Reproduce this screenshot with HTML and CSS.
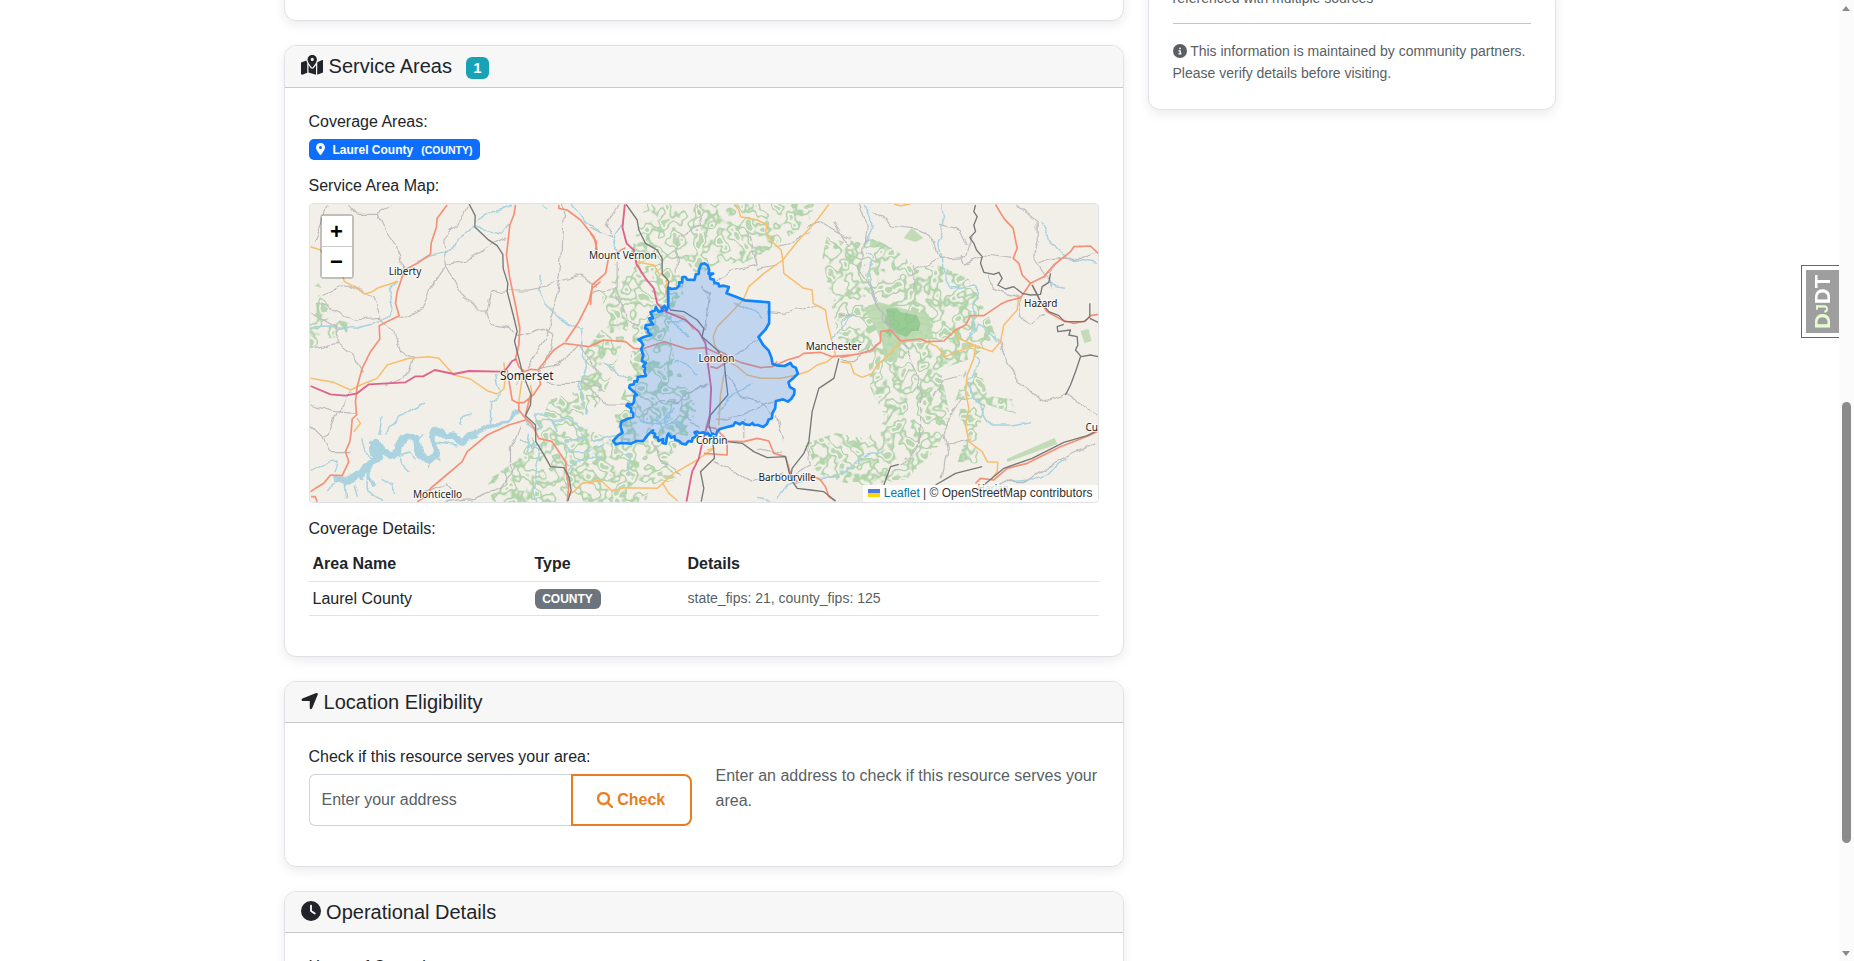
FILE: index.html
```html
<!DOCTYPE html>
<html lang="en">
<head>
<meta charset="utf-8">
<title>Resource Details</title>
<link rel="stylesheet" href="styles.css">
</head>
<body>
<div class="screen">
<div class="page">
  <main class="main-col">
    <section class="card card-prev"></section>

    <section class="card">
      <header class="card-header card-header-badge">
        <svg class="icon icon-map" viewBox="0 0 576 512"><path d="M408 120c0 54.6-73.1 151.9-105.2 192c-7.7 9.6-22 9.6-29.6 0C241.1 271.9 168 174.6 168 120C168 53.7 221.7 0 288 0s120 53.7 120 120zm8 80.4c3.5-6.9 6.7-13.8 9.6-20.6c.5-1.2 1-2.5 1.5-3.7l116-46.4C558.9 123.4 576 135 576 152V422.8c0 9.8-6 18.6-15.1 22.3L416 503V200.4zM137.6 138.3c2.4 14.1 7.2 28.3 12.8 41.5c2.9 6.8 6.1 13.7 9.6 20.6V451.8L32.9 502.7C17.1 509 0 497.4 0 480.4V209.6c0-9.8 6-18.6 15.1-22.3l122.6-49zM327.8 332c13.9-17.4 35.7-45.7 56.2-77V504.3L192 449.4V255c20.5 31.3 42.3 59.6 56.2 77c20.5 25.6 59.1 25.6 79.6 0zM288 152a40 40 0 1 0 0-80 40 40 0 1 0 0 80z"/></svg>
        <h5>Service Areas</h5><span class="badge badge-count">1</span>
      </header>
      <div class="card-body">
        <h6>Coverage Areas:</h6>
        <div class="badges"><span class="badge badge-primary"><svg class="icon icon-pin" viewBox="0 0 384 512"><path d="M215.7 499.2C267 435 384 279.4 384 192C384 86 298 0 192 0S0 86 0 192c0 87.4 117 243 168.3 307.2c12.3 15.3 35.1 15.3 47.4 0zM192 128a64 64 0 1 1 0 128 64 64 0 1 1 0-128z"/></svg><span>Laurel County</span><small>(COUNTY)</small></span></div>
        <h6>Service Area Map:</h6>
        <div class="map">
          <svg class="map-canvas" viewBox="309.5 204 788 298" preserveAspectRatio="none">
            <defs>
              <filter id="woods" x="0" y="0" width="100%" height="100%" color-interpolation-filters="sRGB">
                <feTurbulence type="fractalNoise" baseFrequency=".085" numOctaves="2" seed="8" result="n"/>
                <feColorMatrix in="n" type="matrix" values="0 0 0 0 .70  0 0 0 0 .83  0 0 0 0 .67  1 0 0 0 0"/>
                <feComponentTransfer><feFuncA type="table" tableValues="0 0 0 0 0 0 0 0 0 0 0 0 0 0 .2 1 1 .6 0 0 0 .8 .9 .9 .9 .9 .9 .9 .9 .9 .9"/></feComponentTransfer>
                <feComposite in2="SourceGraphic" operator="in"/>
              </filter>
              <filter id="wiggle" x="-5%" y="-5%" width="110%" height="110%" color-interpolation-filters="sRGB">
                <feTurbulence type="fractalNoise" baseFrequency=".09" numOctaves="1" seed="3"/>
                <feDisplacementMap in="SourceGraphic" scale="9" xChannelSelector="R" yChannelSelector="G"/>
              </filter>
            </defs>
            <rect class="land" x="300" y="195" width="810" height="320"/>

            <!-- woodland -->
            <g filter="url(#woods)">
              <rect x="300" y="195" width="810" height="320" fill="none"/>
              <path d="M309 300l22-6-6 24 22 4v12l-24 6-14 10zM645 204h170l-8 20-24 16-14 10-28 14-22-2-22 14-14-18-16 22-22 22-14 14-10 30-14 40-10 20-16 10-18 40 20 10 14 20-32 14-18 20 2 30h-60l4-40-6-30 30-20 20-30 12-30 30-10 6-40 20-26-4-34 24-20z"/>
              <path d="M646 275l30-2 20 16-20 10-8 30 6 30 22 50-10 30-20 20 10 20-30 10-30-4 8-30-10-40 12-30 6-40-4-40zM535 420h30l70 30 20 20-10 32h-105l-5-40z"/>
              <path d="M826 237l26 4 22-2 20 10 24 20 20-4 30 14 18 30 10 30-26 20-30 10 10 50-14 30-30 30-50 8-40-14-10-30 30-10 30 6 20-20-16-30-2-30-30-20-10-50-6-32zM965 370l16 4 6 22 30 4-2 14-30-10-10 40 6 20-24-2 10-30-14-26z"/>
            </g>
            <g class="forest">
              <path d="M878 302l30 8 20 4 5 24-20 4-32 0-6-14-12-20zM880 330l20 12-4 20-12-1zM903 238l8-10 12 10-8 4zM870 240l7 1-2 7-6-1zM1006 459l48-21 3 6-50 18zM1080 331l8-2 3 12-7 2zM838 240l6 2-4 4zM314 286l4-3 3 5z"/>
              <path class="deep" d="M886 309l10-1 4 4 10 2 6 1 4 8-2 8-6 0-6 6-8-3-6-2-2 6-5-6 4-4-5-6 2-6z"/>
            </g>

            <!-- water -->
            <g class="water" filter="url(#wiggle)">
              <g transform="translate(300 195) scale(.33333)">
                <path class="lake" d="M98 852L135 856 165 840 190 825 205 800 235 790 215 760 228 742 240 770 270 782 295 770 300 735 320 725 350 735 360 780 385 797 405 780 400 740 395 705 420 715 440 725 460 722 485 745 505 722 530 712"/>
                <path class="creek wide" d="M530 712L560 700 580 688 620 685 635 655 655 655M205 800l0 50 15 20M240 770l-30-30M190 825l-10 30"/>
                <path class="creek" d="M30 400q80-10 140 0l80-25 30-30-15-60 20-30M525 100l80 15 20-25M520 80l60-30 40-10 20-10M520 95l-50 35-10 35-60 15-50 20M180 730l10 40 30 20M250 720l50-60 60-30 20-5M330 830l-30-30-5-30M130 850l5 60M200 820l0 60 50 40M240 850l40 20 5 30M30 832l60-30 20 0-10 30M480 690l10-30 20-5M720 240l-10 40 20 40 60 60 50 20 5 60 10 60-20 60 30 80M570 690l0-70 30-20-15-60M670 660q20 60 50 40l-15-40 40 0 25 50-10-30 40-10 30 20 30 40-40 10-30 0 20 30 60 0 40-20M690 750l30 0-10 60-10 80 10 30M790 840l50-50 60 0M810 20l40 60 50 30M740 40l-20-15M660 730l40 30M470 750l-60-10-15 20M690 720l-10 60M345 790l-15-20-30 10M385 797l0 25M420 790l-15 0M360 740l10-20M235 720l10-50M160 865l10 40M100 865l-20 20"/>
              </g>
              <g transform="translate(590 195) scale(.33333)">
                <path class="creek" d="M100 80l-30 60 15 30M220 350l30 30 50 50M230 380l60 0M250 500l40 10 30 30M430 325l60 20 30 20M480 570l-70 40-30 50M180 700l20-40 0 30 30-30 20-30M200 690l30-10 0-30M210 710l40-30 20 10M150 680l60 10 40-20M0 740l80-20 15-20M40 500l80 60M90 780l30 0-5 60M780 370l-50 60M560 910l30-40 50-20 80 0 60-30M500 910l50 10"/>
              </g>
              <g transform="translate(840 195) scale(.33333)">
                <path class="creek" d="M75 30l20 60-20 60M80 170l20 20-20 60 30 70M300 30l10 60-20 50 20 90 20 50 80-10-10 100-10 60 20-40 70 50M400 480l20 20-40 60 40 80 30 50 60 0 60-10M0 840l80-60 50-10M0 380l40-20M480 860l120-10 80-60M620 270l50 10M600 80l30 60 50 50 90 15"/>
              </g>
            </g>

            <!-- minor roads -->
            <g class="minor" filter="url(#wiggle)">
              <g transform="translate(300 195) scale(.33333)">
                <path d="M80 30l-40 110M150 30l20 25 60 0 40-25M230 55l30 65 40 60 10 60M60 300l80-30 80 30 20 70-80 5-110-50M240 370l40 40 20 60 40 20-30 60-60 20M300 370l70-30 20-60 45-65-5-80 50-60 20-40M440 205l60-10 80-50 40-20M440 215l40 80 50 50 30 0 10 40 60 10 20 30 80-25 30 20-40 120M560 345l10-50 60-10 60 0 150-45 50 40M790 30l-10 180-10 80-30 130-60 100M30 460l80-15 50 40 30 50M30 630l70 20 70 5M30 690l40 40 20 40 60 0M75 730l30-70 50-70M110 445l0-50-80-40M715 520l60-10 60-60 60 80M730 565l110 0 60 10M660 690l-30 70 0 70-30 50-80 30-90 10M430 865l50 50M370 890l60-20M640 570l30-50"/>
              </g>
              <g transform="translate(590 195) scale(.33333)">
                <path d="M80 30l-30 60 20 40-70-30M80 200l0 80-80 15M80 300l30 70 30 30M320 30l10 60-70 40 0 100M470 110l30 100-80 20-50 40M500 220l60-10M650 95l40-15 90 50M660 110l-70 40-40 10M530 350l60 5 60-25 40 10M330 270l30 30-15 100M500 430l-60 50-40 10M345 560l-80 60-50 0-60 30M350 560l-70 50 0 50 50 40M400 530l60 80 50 10M370 680l80-20 100-40M0 590l60 40 50 0M180 740l30 50 60 50M370 800l80 40 30 20 100-20M460 730l0-60M560 660l20 80M510 620l40 40M500 760l80 15M650 750l10 60-60 40M730 80l50 80"/>
              </g>
              <g transform="translate(840 195) scale(.33333)">
                <path d="M60 30l20 60-10 100-20 30 50 70 30 90 60 60 40 100 10 80 0 120-40 60-20 10M95 50l60 40 70 10 50 30 20 60 80-5 20-60M300 90l60 20 20 40M365 180l10 30 60-30 80 10M220 290l0-60 70-40M440 240l20 40 80 30M530 30l60 50 0 60-10 40 40 60 10 40M660 190l-60 10M480 440l20 60 40 60 60 60 80-20 90 60M540 310l-10 50 40 30 40-30M370 600l-40 60-20 60 10 40-15 90M370 540l-60 15-30 50M770 740l-120 60-100 60-70 0M0 350l50 20M110 320l40 70M0 500l40 0 80-60M780 170l-60 20-60 0-50 60M390 730l-70 20"/>
              </g>
            </g>

            <!-- main roads -->
            <g class="roads">
              <g transform="translate(300 195) scale(.33333)">
                <path class="sec" d="M30 155l30 10 10 15M127 245l5 15 30 15 30 22 20-5 20-13 60-20M30 550l70 12 50 23 30-15 50-20 30-40 65-20 60-5 30 5 45 50 50 12 50 35 30 10 20-15 5-35-5-45M170 670l10 15-20 25M655 620l10-70 5-20M690 570l5 25-15 25M815 895l30-30 55-8"/>
                <path class="pri" d="M440 30L410 70 408 95 392 145 390 178 350 205 318 222 305 245 290 290 285 325 296 362 270 375 236 392 238 432 210 470 185 520 170 575 165 620 168 660 155 672 152 710 148 740 135 770 145 800 125 842 90 840 70 865 45 880 30 890M32 905l12 0 6 15M645 30L640 60 628 90 618 180 628 250 645 330 658 400 655 450 645 490 655 515 670 530 690 523 715 525 720 515 760 465 790 445 830 450 865 455 900 440M795 440l40-60 30-60 10-40 25-20M775 30l0 10 25 5 40 30 40 50 10 40M620 525l15 90 15 8 20 0 30-25 20-30-5-40M655 620l0 25 20 25 20 20 20 40 40 10 20 30 20 30 5 50 5 25-5 45M675 675L625 690 560 720 500 770 485 800 420 855 390 880 385 900 350 920M690 600l-15 60"/>
                <path class="trunk" d="M30 573L90 598 135 602 170 595 205 568 315 562 345 544 368 544 403 525 460 537 505 528 600 530 615 525 635 498 648 492"/>
                <path class="rail" d="M506 27L524 62 523 96 562 133 590 152 607 178 608 220 622 265 620 290 642 375 650 410 642 438 655 490 665 530 678 565 692 600 690 630 675 662 705 690 706 740 728 775 750 815 790 818 805 845 812 885 802 918"/>
              </g>
              <g transform="translate(590 195) scale(.33333)">
                <path class="sec" d="M432 30L445 45 450 65 500 75 530 90 525 110 550 145 572 165 577 195 580 235 640 280 665 285 668 325 705 345 712 390 725 440 735 480M577 195L620 140 680 75 715 28M577 195L520 235 475 275 458 315 420 355 380 395 368 425 372 450 390 480M135 200L190 210 205 235 230 250 225 300M735 480L710 500 680 510 655 528 620 540 570 550 510 550 470 540 440 515 415 500M400 540L390 600 385 690M0 860L30 855 65 888 100 878 200 880 250 835 320 795 370 760 350 765M215 862L235 895 262 918M240 355l40 10 30 40"/>
                <path class="pri" d="M0 330L5 270 45 235 55 185 105 158M0 115L18 140 15 170M0 452L40 435 105 440 130 460 155 462 220 440 290 462 345 458 380 475 450 502 510 518 545 515 590 495 625 485 640 475 690 472 725 485 780 480M380 465l25 12 15 18-40 25-20-5M345 695L375 700 412 738 460 740 500 730 535 738 550 775 585 785 600 835 620 862M410 740l0 40-70-5M650 835L690 855 705 875 715 905 735 918M545 515L560 500"/>
                <path class="trunk" d="M103 28L96 98 108 145 130 165 138 208 165 250 190 280 200 325 225 350 285 375 325 410 345 445 350 490 362 580 358 660 345 710 335 745 325 790 305 830 298 865 288 920"/>
                <path class="rail" d="M107 28L140 75 145 105 165 145 200 165 215 190 215 235 235 260 230 290 232 330 240 345 280 350 320 375 340 400 335 425 380 465 400 490 405 540 412 600 360 660 355 690 365 720 372 790 330 830 340 880 332 920M410 740L455 745 490 770 530 788 585 785 600 850 620 880 660 885 700 890 735 918M745 490L730 550 685 580 665 650 655 740 640 775 605 820 600 850"/>
              </g>
              <g transform="translate(840 195) scale(.33333)">
                <path class="sec" d="M0 500L30 505 40 535 65 547 95 535 110 510 145 480 180 440M245 435L290 455 315 485 350 470 405 450 400 490 380 540 375 590 385 640 375 690 385 740 425 770 440 800 472 802 470 830 455 850M345 405L355 430 400 450 455 470 480 440 490 390 530 345 535 305M160 27l20 5 30-5"/>
                <path class="pri" d="M0 487L60 475 95 465 120 440 120 410 150 405 180 438 240 432 260 440 310 438 345 405 375 390 390 362 430 362 480 328 500 318 540 308 570 265 545 240 535 205 518 190 530 160 518 100 490 70 465 28M570 265L610 245 640 210 690 170 700 155 750 153 773 175M575 270L600 320 620 350 665 375 700 385 735 378 750 362 773 358M405 865L420 850 460 855 500 820 560 805 660 755 750 720 773 708"/>
                <path class="rail wiggly" d="M405 30L400 50 410 65 400 90 405 110 388 128 400 145 408 165 425 185 420 205 430 232 460 238 475 232 485 250 472 270 495 282 520 275 545 295 570 300 600 298 605 275 625 262 630 235M575 270L590 298 600 320 625 350 655 362 672 380 730 380 748 365 748 325M748 370L773 382M670 388L650 395 652 410 690 405 685 420 710 425 712 450 705 465 722 485 750 480 773 485M720 485L705 530 690 570 675 600"/>
                <path class="rail" d="M130 870L150 815 175 808M285 870L345 835 425 815M430 870L490 820 575 790 670 742 740 722 773 705"/>
              </g>
            </g>

            <!-- county boundary -->
            <path class="county" transform="translate(590 195) scale(.33333)" d="M233 332L233 277 243 282 258 280 266 272 266 262 275 262 276 246 285 246 290 254 312 255 316 238 325 236 325 225 332 208 342 205 352 212 356 225 354 236 368 236 358 242 360 252 370 254 372 264 384 266 386 274 400 272 415 276 408 295 440 307 462 316 500 319 536 322 536 384 526 402 504 426 518 450 534 466 543 488 546 506 558 511 582 513 600 504 606 514 616 518 622 536 608 550 594 562 598 576 612 584 611 598 602 612 592 620 578 613 556 618 554 640 546 654 544 670 534 674 530 686 518 696 502 690 490 690 486 684 478 690 464 688 456 682 448 688 434 682 428 692 410 696 388 702 380 710 376 722 366 716 358 724 352 714 346 718 340 712 326 714 320 710 312 712 320 722 306 730 304 740 294 738 286 748 274 746 266 738 254 734 252 724 242 728 234 716 230 722 226 746 216 744 218 732 204 738 202 728 192 726 194 716 182 712 188 706 178 714 170 722 158 738 138 738 122 746 92 744 76 748 68 738 82 722 96 714 90 694 92 680 110 672 128 666 128 654 122 650 122 640 108 632 112 626 124 630 130 622 132 602 140 600 130 590 116 578 118 570 130 568 132 558 140 560 142 546 166 542 162 530 164 518 158 514 166 504 154 498 158 480 152 462 158 450 152 440 144 434 160 426 182 420 172 412 172 404 164 400 166 390 188 388 180 378 176 370 188 370 180 352 194 346 196 336 204 350 216 348 214 340 222 332 228 346z"/>

            <!-- labels -->
            <g class="labels">
              <text x="388.3" y="274.5">Liberty</text>
              <text x="499.500" y="379.500" class="city">Somerset</text>
              <text x="412.500" y="497.500">Monticello</text>
              <text x="588.500" y="258.500">Mount Vernon</text>
              <text x="698" y="361.500">London</text>
              <text x="695.5" y="443.500">Corbin</text>
              <text x="758" y="481">Barbourville</text>
              <text x="805.200" y="349.500">Manchester</text>
              <text x="1023.500" y="306.500">Hazard</text>
              <text x="1085" y="430.500">Cu</text>
              <text x="977" y="491.500">Harlan</text>
            </g>
          </svg>
          <div class="zoom"><span>+</span><span>−</span></div>
          <div class="attribution"><svg class="flag" viewBox="0 0 12 8"><path fill="#4c7be1" d="M0 0h12v4H0z"/><path fill="#ffd500" d="M0 4h12v4H0z"/></svg> <a>Leaflet</a> | © OpenStreetMap contributors</div>
        </div>
        <h6 class="gap-top">Coverage Details:</h6>
        <table class="details">
          <thead><tr><th class="col-name">Area Name</th><th class="col-type">Type</th><th>Details</th></tr></thead>
          <tbody><tr><td>Laurel County</td><td><span class="badge badge-secondary">COUNTY</span></td><td class="small muted">state_fips: 21, county_fips: 125</td></tr></tbody>
        </table>
      </div>
    </section>

    <section class="card">
      <header class="card-header">
        <svg class="icon icon-arrow" viewBox="0 0 448 512"><path d="M429.6 92.1c4.9-11.9 2.1-25.6-7-34.7s-22.8-11.9-34.7-7l-352 144c-14.2 5.8-22.2 20.8-19.3 35.8s16.1 25.8 31.4 25.8H224V432c0 15.3 10.8 28.4 25.8 31.4s30-5.1 35.8-19.3l144-352z"/></svg>
        <h5>Location Eligibility</h5>
      </header>
      <div class="card-body eligibility">
        <div>
          <h6>Check if this resource serves your area:</h6>
          <div class="input-group">
            <input type="text" placeholder="Enter your address">
            <button type="button"><svg class="icon icon-search" viewBox="0 0 512 512"><path d="M416 208c0 45.9-14.9 88.3-40 122.7L502.6 457.4c12.500 12.500 12.500 32.800 0 45.300s-32.800 12.500-45.300 0L330.700 376c-34.400 25.200-76.800 40-122.700 40C93.100 416 0 322.900 0 208S93.100 0 208 0S416 93.100 416 208zM208 352a144 144 0 1 0 0-288 144 144 0 1 0 0 288z"/></svg>Check</button>
          </div>
        </div>
        <p class="muted">Enter an address to check if this resource serves your area.</p>
      </div>
    </section>

    <section class="card">
      <header class="card-header">
        <svg class="icon icon-clock" viewBox="0 0 512 512"><path d="M256 0a256 256 0 1 1 0 512A256 256 0 1 1 256 0zM232 120V256c0 8 4 15.500 10.700 20l96 64c11 7.400 25.900 4.400 33.300-6.700s4.400-25.900-6.700-33.300L280 243.200V120c0-13.300-10.700-24-24-24s-24 10.700-24 24z"/></svg>
        <h5>Operational Details</h5>
      </header>
      <div class="card-body"><h6>Hours of Operation:</h6></div>
    </section>
  </main>

  <aside class="side-col">
    <section class="card side-card">
      <p class="small muted">referenced with multiple sources</p>
      <hr>
      <p class="small muted"><svg class="icon icon-info" viewBox="0 0 512 512"><path d="M256 512A256 256 0 1 0 256 0a256 256 0 1 0 0 512zM216 336h24V272H216c-13.300 0-24-10.700-24-24s10.700-24 24-24h48c13.300 0 24 10.700 24 24v88h8c13.300 0 24 10.700 24 24s-10.700 24-24 24H216c-13.300 0-24-10.700-24-24s10.700-24 24-24zm40-208a32 32 0 1 1 0 64 32 32 0 1 1 0-64z"/></svg> This information is maintained by community partners. Please verify details before visiting.</p>
    </section>
  </aside>
</div>
<div class="scrollbar"><i class="up"></i><i class="thumb"></i><i class="down"></i></div>
<div class="toolbar-handle"><div><span class="d">D</span><span class="j">J</span>DT</div></div>
</div>
</body>
</html>
```

FILE: styles.css
```css
* { box-sizing: border-box; }
body {
  margin: 0;
  font: 16px/1.6 "Liberation Sans", Arial, sans-serif;
  color: #212529;
  background: #fff;
}
h5, h6, p { margin: 0; font-weight: 400; }
h5 { font-size: 20px; line-height: 24px; }
h6 { font-size: 16px; line-height: 19.2px; margin-bottom: 8px; }
.icon { fill: currentColor; display: block; flex: none; }
.muted { color: #595f64; }
.small { font-size: 14px; }

.screen { position: relative; display: flex; height: 961px; overflow: hidden; }
.page {
  flex: 1;
  display: flex;
  justify-content: center;
  align-items: flex-start;
  gap: 24px;
}
.main-col { width: 840px; display: flex; flex-direction: column; gap: 24px; }
.side-col { width: 408px; }

.card {
  background: #fff;
  border: 1px solid #dee2e6;
  border-radius: 12px;
  box-shadow: 0 4px 12px rgba(0, 0, 0, .08);
}
.card-prev { height: 41px; margin-top: -20px; }
.card-header {
  display: flex;
  align-items: center;
  height: 41px;
  padding: 0 16px;
  background: #f7f7f7;
  border-bottom: 1px solid #c8c9ca;
  border-radius: 11px 11px 0 0;
}
.card-header-badge { height: 42px; }
.card-header-badge h5 { margin-top: -1px; }
.card-body { padding: 24px 24px 40px; }
.icon-map { width: 22.500px; height: 20px; margin: -3px 5.600px 0 0; }
.icon-arrow { width: 17.500px; height: 20px; margin: -1px 5.600px 0 0; }
.icon-clock { width: 20px; height: 20px; margin: -2px 5.600px 0 0; }

.badge {
  display: inline-flex;
  align-items: center;
  justify-content: center;
  color: #fff;
  font-weight: 700;
  font-size: 12px;
  line-height: 12px;
  border-radius: 6px;
}
.badge-count { width: 23px; height: 22px; margin: 3px 0 0 14px; font-size: 15px; background: #17a2b8; }
.badges { display: flex; margin-bottom: 16px; }
.badge-primary { width: 171px; height: 21px; background: #0d6efd; border-radius: 5px; }
.badge-primary small { font-size: 10.500px; margin: 1px 0 0 8px; }
.icon-pin { width: 9px; height: 12px; margin: -1px 8px 0 0; }
.badge-secondary { width: 66px; height: 20px; background: #6c757d; vertical-align: middle; }

.map {
  position: relative;
  height: 300px;
  border: 1px solid #dee2e6;
  border-radius: 4px;
  overflow: hidden;
}
.map-canvas { display: block; width: 100%; height: 100%; }
.land { fill: #f2efe9; }
.forest { fill: #b9d8ae; opacity: .85; }
.deep { fill: #8ac587; }
.water path, .minor path, .roads path { fill: none; stroke-linejoin: round; }
.water .lake { stroke: #aad3df; stroke-width: 20; }
.water .creek { stroke: #aad3df; stroke-width: 4.500; }
.water .wide { stroke-width: 11; }
.minor path { stroke: #bcbcbc; stroke-width: 3.500; }
.roads .sec { stroke: #f8be6c; stroke-width: 4.500; }
.roads .pri { stroke: #f58f75; stroke-width: 5; }
.roads .trunk { stroke: #e0628a; stroke-width: 5.500; }
.roads .rail { stroke: #777; stroke-width: 4; }
.labels {
  font: 10px "Noto Sans", sans-serif;
  fill: #222;
  stroke: #fff;
  stroke-opacity: .75;
  stroke-width: 2px;
  paint-order: stroke;
}
.labels .city { font-size: 12px; }
.county { fill: rgba(51, 136, 255, .25); stroke: #1285fb; stroke-width: 8; stroke-linejoin: round; }

.zoom {
  position: absolute;
  left: 10px;
  top: 10px;
  border: 2px solid rgba(0, 0, 0, .2);
  border-radius: 4px;
  background-clip: padding-box;
}
.zoom span {
  display: block;
  width: 30px;
  height: 30px;
  font: bold 22px/29px "Liberation Sans", sans-serif;
  text-align: center;
  background: #fff;
  color: #000;
}
.zoom span:first-child { height: 31px; border-bottom: 1px solid #ccc; line-height: 31px; }
.attribution {
  position: absolute;
  right: 0;
  bottom: 0;
  height: 17px;
  padding: 0 5px;
  font-size: 12px;
  line-height: 17px;
  color: #333;
  background: rgba(255, 255, 255, .8);
}
.attribution a { color: #0078a8; }
.flag { width: 12px; height: 8px; }

.gap-top { margin-top: 16px; }
.details { width: 100%; border-collapse: collapse; table-layout: fixed; }
.details th, .details td { text-align: left; padding: 4px; height: 34.400px; border-bottom: 1px solid #dee2e6; line-height: 25px; }
.col-name { width: 222px; }
.col-type { width: 153px; }

.eligibility { display: grid; grid-template-columns: 383px 383px; gap: 24px; }
.eligibility p { margin-top: 16px; height: 52px; }
.input-group { display: flex; height: 52px; }
.input-group input {
  flex: 1;
  min-width: 0;
  padding: 0 12px;
  border: 1px solid #ced4da;
  border-right: 0;
  border-radius: 6px 0 0 6px;
  font: inherit;
}
.input-group input::placeholder { color: #595f64; opacity: 1; }
.input-group button {
  display: flex;
  align-items: center;
  justify-content: center;
  width: 121px;
  border: 2px solid #e67e22;
  border-radius: 0 8px 8px 0;
  background: #fff;
  color: #e67e22;
  font: inherit;
  font-weight: 700;
}
.icon-search { width: 16px; height: 16px; margin: -1px 4.500px 0 0; }
.icon-search path { stroke: currentColor; stroke-width: 14; }

.side-card { margin-top: -14px; padding: 0 24px 23px; height: 124px; }
.side-card hr { margin: 14.400px 0 16px; border: 0; border-top: 1px solid #c4c6c8; }
.side-card p { line-height: 22px; }
.icon-info { display: inline-block; width: 14px; height: 14px; vertical-align: -2px; }

.scrollbar { position: relative; width: 15px; background: #fbfbfb; }
.scrollbar i { position: absolute; }
.thumb { left: 3px; top: 402px; width: 9px; height: 441px; border-radius: 5px; background: #8b8b8b; }
.up, .down { left: 3px; border: solid transparent; border-width: 0 4.500px; }
.up { top: 6px; border-bottom: 5px solid #8b8b8b; }
.down { bottom: 5px; border-top: 5px solid #8b8b8b; }

.toolbar-handle {
  position: absolute;
  right: 15px;
  top: 265px;
  width: 38px;
  height: 73px;
  padding: 4px 0 4px 4px;
  border: 1px solid #666;
  border-right: 0;
  background: #fff;
}
.toolbar-handle div {
  width: 33px;
  height: 63px;
  writing-mode: vertical-rl;
  transform: rotate(180deg);
  background: #9e9e9e;
  color: #fff;
  font: bold 22px/33px "Liberation Sans", sans-serif;
  text-align: center;
}
.toolbar-handle .d, .toolbar-handle .j { color: #e4fdd0; }
.toolbar-handle .j { font-size: 16px; }
```
